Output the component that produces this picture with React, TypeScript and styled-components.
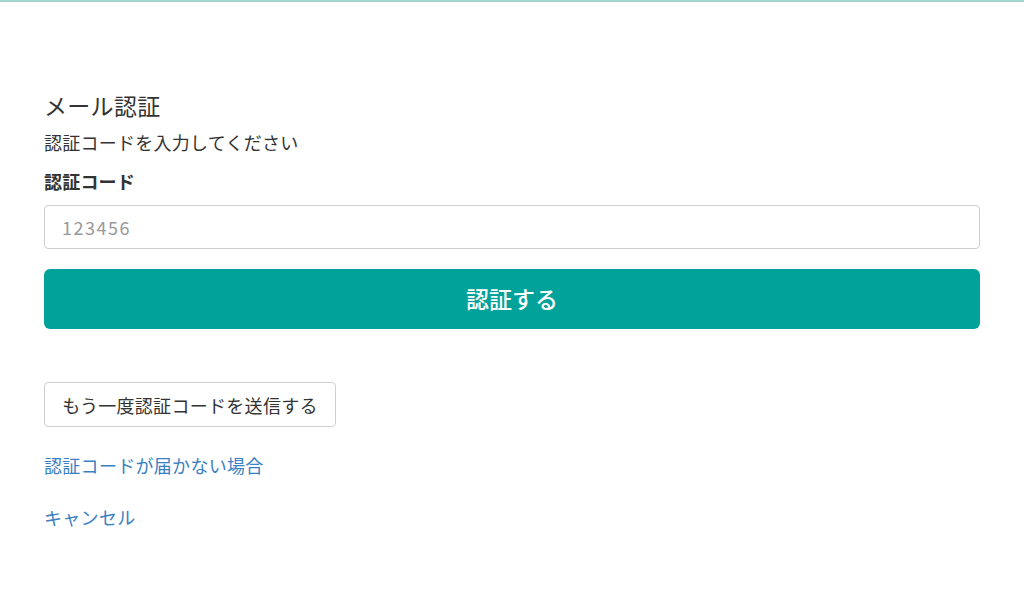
import React from "react";
import styled, { createGlobalStyle } from "styled-components";

const Global = createGlobalStyle`
  html, body { margin: 0; padding: 0; background: #fff; }
  body {
    font-family: "Noto Sans CJK JP", "Noto Sans", sans-serif;
    color: #333;
  }
  * { box-sizing: border-box; }
`;

const Page = styled.div`
  min-height: 611px;
  border-top: 2px solid #a3d6d0;
  padding: 86px 44px 0 44px;
`;

const Form = styled.div`
  width: 936px;
  display: flex;
  flex-direction: column;
`;

const Title = styled.h1`
  margin: 0;
  font-size: 23px;
  letter-spacing: 0.3px;
  font-weight: 400;
  line-height: 34px;
  color: #333;
`;

const Lead = styled.p`
  margin: 6px 0 0 0;
  font-size: 18px;
  letter-spacing: 0.25px;
  line-height: 28px;
  color: #333;
`;

const Label = styled.label`
  margin-top: 11px;
  font-size: 18px;
  letter-spacing: 0.2px;
  font-weight: 700;
  line-height: 28px;
  color: #333;
`;

const Input = styled.input`
  margin-top: 10px;
  height: 44px;
  width: 100%;
  border: 1px solid #cfcfcf;
  border-radius: 4px;
  padding: 0 17px;
  font-family: "Noto Sans CJK JP", "Noto Sans", sans-serif;
  font-size: 18px;
  letter-spacing: 1.5px;
  color: #333;
  outline: none;
  &::placeholder { color: #999; }
`;

const Primary = styled.button`
  margin-top: 20px;
  height: 60px;
  width: 100%;
  border: none;
  border-radius: 6px;
  background: #00a29a;
  color: #fff;
  font-family: "Noto Sans CJK JP", "Noto Sans", sans-serif;
  font-size: 23px;
  font-weight: 500;
  padding: 0 0 3px 0;
  cursor: pointer;
`;

const Secondary = styled.button`
  margin-top: 53px;
  align-self: flex-start;
  height: 45px;
  width: 292px;
  border: 1px solid #cfcfcf;
  border-radius: 4px;
  background: #fff;
  color: #333;
  font-family: "Noto Sans CJK JP", "Noto Sans", sans-serif;
  font-size: 18px;
  letter-spacing: 0.3px;
  padding: 0;
  cursor: pointer;
`;

const Links = styled.div`
  margin-top: 24px;
  display: flex;
  flex-direction: column;
  gap: 24px;
`;

const Link = styled.a`
  font-size: 18px;
  letter-spacing: 0.3px;
  line-height: 28px;
  color: #3a80c3;
  text-decoration: none;
  align-self: flex-start;
`;

export default function App() {
  return (
    <>
      <Global />
      <Page>
        <Form>
          <Title>メール認証</Title>
          <Lead>認証コードを入力してください</Lead>
          <Label htmlFor="code">認証コード</Label>
          <Input id="code" placeholder="123456" />
          <Primary>認証する</Primary>
          <Secondary>もう一度認証コードを送信する</Secondary>
          <Links>
            <Link href="#">認証コードが届かない場合</Link>
            <Link href="#">キャンセル</Link>
          </Links>
        </Form>
      </Page>
    </>
  );
}
